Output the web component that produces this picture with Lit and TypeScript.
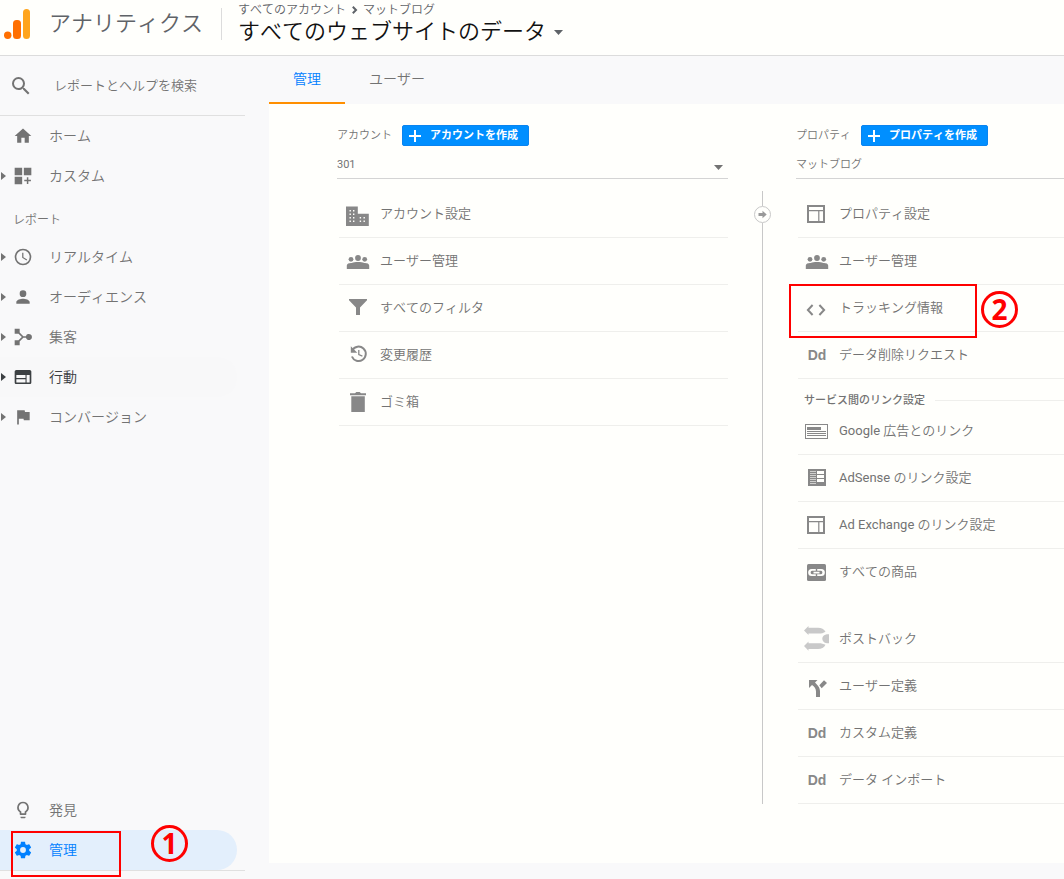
import { LitElement, html, css, svg, nothing, TemplateResult } from "lit";
import { customElement, state } from "lit/decorators.js";
import { classMap } from "lit/directives/class-map.js";

interface NavItem {
  label: string;
  icon: string;
  expandable?: boolean;
  state?: "hover" | "active";
  step?: string;
}

interface AdminItem {
  label: string;
  icon: string;
  step?: string;
  last?: boolean;
}

const topNav: NavItem[] = [
  { label: "ホーム", icon: "home" },
  { label: "カスタム", icon: "custom", expandable: true },
];

const reportNav: NavItem[] = [
  { label: "リアルタイム", icon: "clock", expandable: true },
  { label: "オーディエンス", icon: "person", expandable: true },
  { label: "集客", icon: "acquisition", expandable: true },
  { label: "行動", icon: "web", expandable: true, state: "hover" },
  { label: "コンバージョン", icon: "flag", expandable: true },
];

const bottomNav: NavItem[] = [
  { label: "発見", icon: "bulb" },
  { label: "管理", icon: "gear", state: "active", step: "1" },
];

const accountItems: AdminItem[] = [
  { label: "アカウント設定", icon: "building" },
  { label: "ユーザー管理", icon: "users" },
  { label: "すべてのフィルタ", icon: "filter" },
  { label: "変更履歴", icon: "history" },
  { label: "ゴミ箱", icon: "trash" },
];

const propertyItems: AdminItem[] = [
  { label: "プロパティ設定", icon: "layout" },
  { label: "ユーザー管理", icon: "users" },
  { label: "トラッキング情報", icon: "code", step: "2" },
  { label: "データ削除リクエスト", icon: "Dd" },
];

const linkItems: AdminItem[] = [
  { label: "Google 広告とのリンク", icon: "ads" },
  { label: "AdSense のリンク設定", icon: "adsense" },
  { label: "Ad Exchange のリンク設定", icon: "layout" },
  { label: "すべての商品", icon: "link", last: true },
];

const dataItems: AdminItem[] = [
  { label: "ポストバック", icon: "postback" },
  { label: "ユーザー定義", icon: "split" },
  { label: "カスタム定義", icon: "Dd" },
  { label: "データ インポート", icon: "Dd" },
];

const icons: Record<string, TemplateResult> = {
  search: svg`<path d="M15.5 14h-.79l-.28-.27A6.47 6.47 0 0 0 16 9.5 6.5 6.5 0 1 0 9.5 16c1.61 0 3.09-.59 4.23-1.57l.27.28v.79l5 4.99L20.49 19l-4.99-5zm-6 0C7.01 14 5 11.99 5 9.5S7.01 5 9.5 5 14 7.01 14 9.5 11.99 14 9.5 14z"/>`,
  home: svg`<path d="M10 20v-6h4v6h5v-8h3L12 3 2 12h3v8z"/>`,
  custom: svg`<path d="M2 2h9v9H2zM13 2h9v9h-9zM2 13h9v9H2zM16.6 13.5h1.8v3.1h3.1v1.8h-3.1v3.1h-1.8v-3.1h-3.1v-1.8h3.1z"/>`,
  clock: svg`<path d="M12 2a10 10 0 1 0 0 20 10 10 0 0 0 0-20zm0 18a8 8 0 1 1 0-16 8 8 0 0 1 0 16zM12.5 7H11v6l5.25 3.15.75-1.23-4.5-2.67z"/>`,
  person: svg`<path d="M12 12a4 4 0 1 0 0-8 4 4 0 0 0 0 8zm0 2c-2.67 0-8 1.34-8 4v2h16v-2c0-2.66-5.33-4-8-4z"/>`,
  acquisition: svg`<path d="M2 2h6v4.6l4.4 4.4h3.1a3.7 3.7 0 1 1 0 2h-3.1L8 17.4V22H2v-6h4.6l4-4-4-4H2z"/>`,
  web: svg`<path d="M20 3.500H4c-1.100 0-2 .9-2 2v13c0 1.100.9 2 2 2h16c1.100 0 2-.9 2-2v-13c0-1.100-.9-2-2-2zm-5 15.200H4v-4h11v4zm0-5.500H4V9.500h11v3.700zm5 5.500h-3.700V9.500H20v9.200z"/>`,
  flag: svg`<path d="M14.400 6 14 4H5v17h2v-7h5.600l.4 2h7V6z"/>`,
  bulb: svg`<path d="M9 21c0 .55.45 1 1 1h4c.55 0 1-.45 1-1v-.8H9v.8zm3-19a7 7 0 0 0-4 12.740V17c0 .55.45 1 1 1h6c.55 0 1-.45 1-1v-2.260A7 7 0 0 0 12 2zm2.850 11.100-.85.6V16h-4v-2.300l-.85-.6A5 5 0 1 1 14.850 13.100z"/>`,
  gear: svg`<path d="M19.430 12.980c.04-.32.07-.64.07-.98s-.03-.66-.07-.98l2.110-1.650c.19-.15.24-.42.12-.64l-2-3.460c-.12-.22-.39-.3-.61-.22l-2.490 1c-.52-.4-1.080-.73-1.690-.98l-.38-2.650A.488.488 0 0 0 14 2h-4c-.25 0-.46.18-.49.42l-.38 2.650c-.61.25-1.170.59-1.690.98l-2.490-1c-.23-.09-.49 0-.61.22l-2 3.460c-.13.22-.07.49.12.64l2.110 1.650c-.04.32-.07.65-.07.98s.03.66.07.98l-2.110 1.650c-.19.15-.24.42-.12.64l2 3.460c.12.22.39.3.61.22l2.490-1c.52.4 1.080.73 1.690.98l.38 2.650c.03.24.24.42.49.42h4c.25 0 .46-.18.49-.42l.38-2.650c.61-.25 1.170-.59 1.690-.98l2.490 1c.23.09.49 0 .61-.22l2-3.460c.12-.22.07-.49-.12-.64l-2.110-1.650zM12 15.500a3.500 3.500 0 1 1 0-7 3.500 3.500 0 0 1 0 7z"/>`,
  building: svg`<path d="M0 4.500h11.800v7.200h11V24H0z"/><g class="cut"><path d="M3.500 8h1.400v1.400H3.500zM7 8h1.400v1.400H7zM3.500 11.500h1.400v1.400H3.500zM7 11.500h1.400v1.400H7zM3.500 15h1.400v1.400H3.500zM7 15h1.400v1.400H7zM3.500 18.500h1.400v1.400H3.500zM7 18.500h1.400v1.400H7zM13.700 15h1.400v1.400h-1.400zM17.500 15h1.400v1.400h-1.400zM13.700 18.500h1.400v1.400h-1.400zM17.500 18.500h1.400v1.400h-1.400z"/></g>`,
  users: svg`<circle cx="5" cy="10.300" r="2.400"/><circle cx="12" cy="9" r="2.900"/><circle cx="18.700" cy="10.300" r="2.400"/><path d="M.8 20v-3.400c0-2 2.700-2.700 5-2.500 1.500-.7 3.500-1 6.200-1s4.700.3 6.200 1c2.300-.2 5 .5 5 2.500V20z"/>`,
  filter: svg`<path d="M3 3h18v1.300l-7 7.200V19h-4v-7.500L3 4.300z"/>`,
  history: svg`<path class="line" d="M6.300 7.300A7.200 7.200 0 1 1 5.900 13.500"/><path d="M4.800 3.300v6.500h6.500z"/><path class="thin" d="M12.800 7v4.600l3.600 1.500"/>`,
  trash: svg`<path d="M4 3.200h5L10.300 2h3.400L15 3.200h5v2H4zM5.300 6.200h13.500V22H5.300z"/>`,
  layout: svg`<path fill-rule="evenodd" d="M2 3h18v18H2zm2 2v3h14V5zm0 4.200V19h9.200V9.200zm10.400 0V19H18V9.200z"/>`,
  code: svg`<path class="line" d="M7.600 9 2.900 14l4.700 5M14.400 9l4.700 5-4.700 5"/>`,
  ads: svg`<path fill-rule="evenodd" d="M0 5h23v15H0zm1 1v13h21V6z"/><path d="M2 8h14v3H2zM2 12h19v1H2zM2 14h19v1H2zM2 16h19v1H2z"/>`,
  adsense: svg`<path d="M3 3h18v17H3z"/><g class="cut"><path d="M12 5h7v3h-7zM12 9h7v3h-7zM12 13h7v3h-7z"/><path opacity=".6" d="M5 5h6v1H5zM5 7h6v1H5zM5 9h6v1H5zM5 11h6v1H5zM5 13h6v1H5zM5 15h6v1H5zM5 17h6v1H5z"/></g>`,
  link: svg`<rect x="2" y="4" width="19" height="17" rx="1.500"/><g class="cut"><path fill-rule="evenodd" d="M6.700 9h4.100v1.800H7a1.800 1.800 0 0 0 0 3.500h3.800v1.800H6.700a3.550 3.550 0 0 1 0-7.100zM12.200 9h4.100a3.550 3.550 0 0 1 0 7.100h-4.100v-1.800H16a1.800 1.800 0 0 0 0-3.500h-3.800zM8.500 11.700h6v1.700h-6z"/></g>`,
  postback: svg`<g class="pale"><path d="M-1 3.500 3.500-1v1.700H13c3.500 0 6 1.300 7.500 4-2 1.300-4 1.800-7 1.800h-10V8zM-1 19 3.500 14.500v1.700h10c3 0 5 .5 7 1.600-1.500 2.900-4 4.200-7.500 4.200H3.500v1.700z"/><path d="M24 7.300v8.900c-3.500.3-6.500-1.200-6.700-4.500.2-3.200 3.200-4.700 6.700-4.400z"/></g>`,
  split: svg`<path d="M4 6h8.500L10 8.500c2.600 2.600 5 5 5 9V23h-4v-5.500c0-3-1.600-4.700-4-6.400L4 14zM14.300 11.300 19 6.300 22 9l-5.300 5.300z"/>`,
};

const icon = (name: string, size: number) =>
  html`<svg class="icon" width=${size} height=${size} viewBox="0 0 24 24" aria-hidden="true">${icons[name]}</svg>`;

@customElement("app-root")
export class AppRoot extends LitElement {
  @state() private tab = "管理";

  static styles = css`
    :host {
      display: flex;
      flex-direction: column;
      min-height: 100vh;
      background: #f9f9fa;
      color: #737373;
      font-family: Roboto, "Noto Sans CJK JP DemiLight", "Noto Sans CJK JP", sans-serif;
      font-size: 13px;
      font-weight: 400;
      font-kerning: none;
      line-height: 20px;
    }
    * {
      box-sizing: border-box;
    }
    a {
      color: inherit;
      text-decoration: none;
    }
    button,
    input,
    select {
      margin: 0;
      padding: 0;
      border: 0;
      background: none;
      color: inherit;
      font: inherit;
      font-kerning: none;
      outline: none;
    }
    button {
      cursor: pointer;
    }
    svg {
      display: block;
      flex: none;
      overflow: visible;
      fill: currentColor;
    }
    .cut {
      fill: #fffffc;
    }
    .pale {
      fill: #c9c9c9;
    }
    .line,
    .thin {
      fill: none;
      stroke: currentColor;
      stroke-width: 2;
    }
    .thin {
      stroke-width: 1.3;
    }

    /* Header */
    .header {
      display: flex;
      align-items: flex-start;
      height: 56px;
      border-bottom: 1px solid #dcdcdc;
      background: #fffffc;
    }
    .brand {
      display: flex;
      align-items: center;
      gap: 18px;
      width: 221px;
      height: 48px;
      padding-left: 4px;
      color: #5f6368;
      font-size: 22px;
      font-weight: 300;
    }
    .switcher {
      display: flex;
      flex-direction: column;
      align-items: flex-start;
      margin-top: 8px;
      height: 32px;
      padding-left: 16px;
      border-left: 1px solid #dcdcdc;
      justify-content: center;
    }
    .crumbs {
      display: flex;
      align-items: center;
      gap: 6px;
      font-size: 12px;
      line-height: 16px;
      color: #5f6368;
    }
    .view {
      display: flex;
      align-items: center;
      gap: 8px;
      color: #111;
      font-size: 22px;
      font-weight: 300;
      line-height: 28px;
    }
    .view svg {
      color: #5f6368;
    }

    /* Sidebar */
    .body {
      display: flex;
      flex: 1;
    }
    .sidebar {
      display: flex;
      flex-direction: column;
      flex: none;
      width: 245px;
      margin-right: 24px;
      padding-bottom: 8px;
    }
    .search {
      display: flex;
      align-items: center;
      gap: 21px;
      height: 60px;
      padding-left: 9px;
      border-bottom: 1px solid #e0e0e0;
    }
    .search input {
      flex: 1;
      min-width: 0;
    }
    .search input::placeholder {
      color: #737373;
      opacity: 1;
    }
    .nav-item {
      position: relative;
      display: grid;
      grid-template-columns: 12px 20px 1fr;
      align-items: center;
      height: 40px;
      margin-right: 8px;
      padding-left: 1px;
      border-radius: 0 20px 20px 0;
      font-size: 14px;
    }
    .nav-item .text {
      padding-left: 16px;
    }
    .nav-item.hover {
      background: #f8f8f9;
      color: #3c4043;
    }
    .nav-item.active {
      background: #e3effc;
      color: #0080ff;
    }
    .group {
      padding: 14px 0 7px 13px;
      font-size: 12px;
    }
    .bottom {
      margin-top: auto;
      border-bottom: 1px solid #e0e0e0;
    }

    /* Main */
    .main {
      display: flex;
      flex-direction: column;
      flex: 1;
      min-width: 0;
      padding-bottom: 16px;
    }
    .tabs {
      display: flex;
      height: 48px;
    }
    .tab {
      padding: 0 24px;
      border-bottom: 2px solid transparent;
      font-size: 14px;
    }
    .tab.selected {
      border-color: #ff8f00;
      color: #0080ff;
    }
    .panel {
      display: grid;
      flex: 1;
      align-items: start;
      align-content: start;
      grid-template-columns: minmax(0, 391px) 68px minmax(0, 1fr);
      padding: 21px 0 0 68px;
      background: #fffffc;
    }
    .head {
      display: flex;
      align-items: center;
      gap: 10px;
      height: 21px;
      font-size: 11px;
    }
    .create {
      display: flex;
      align-items: center;
      gap: 9px;
      height: 21px;
      padding: 0 10px 0 6px;
      border: 1px solid #0a84f0;
      border-radius: 2px;
      background: #008fff;
      color: #fff;
      font-family: Roboto, "Noto Sans CJK JP", sans-serif;
      font-size: 11px;
      font-weight: 700;
      line-height: 16px;
    }
    .picker {
      position: relative;
      display: block;
      height: 33px;
      padding-top: 6px;
      border-bottom: 1px solid #d4d4d4;
    }
    .picker select {
      width: 100%;
      height: 26px;
      appearance: none;
      font-size: 11px;
    }
    .picker svg {
      position: absolute;
      right: 5px;
      top: 19px;
    }
    .list {
      margin: 0 0 0 2px;
      padding: 0;
      list-style: none;
    }
    .list.first {
      margin-top: 12px;
    }
    .list.spaced {
      margin-top: 20px;
    }
    .row {
      position: relative;
      height: 47px;
      border-bottom: 1px solid #efefec;
    }
    .row.last {
      border-color: transparent;
    }
    .row a {
      display: flex;
      align-items: center;
      gap: 10px;
      height: 46px;
      padding-left: 7px;
    }
    .row .icon,
    .dd {
      color: #888;
    }
    .dd {
      width: 24px;
      font-family: "Liberation Sans", sans-serif;
      font-size: 14px;
      font-weight: 700;
      text-align: center;
    }
    .section {
      display: flex;
      align-items: center;
      gap: 10px;
      height: 29px;
      margin: 0;
      padding: 14px 0 0 8px;
      font-family: Roboto, "Noto Sans CJK JP", sans-serif;
      font-size: 11px;
      font-weight: 500;
      line-height: 16px;
    }
    .section::after {
      content: "";
      flex: 1;
      border-top: 1px solid #efefec;
    }
    .rail {
      align-self: stretch;
      display: flex;
      flex-direction: column;
      align-items: center;
      margin-top: 66px;
    }
    .rail::before,
    .rail::after {
      content: "";
      width: 1px;
      height: 15px;
      background: #c8c8c8;
    }
    .rail::after {
      flex: 1;
    }
    .rail svg {
      color: #999;
    }

    /* Step annotations drawn over the interface */
    .frame,
    .step {
      position: absolute;
      border: 2px solid #f00;
      pointer-events: none;
    }
    .step {
      display: flex;
      align-items: center;
      justify-content: center;
      width: 37px;
      height: 37px;
      border-width: 3px;
      border-radius: 50%;
      color: #f00;
      font-family: "Noto Sans", sans-serif;
      font-size: 28px;
      font-weight: 700;
      line-height: 31px;
    }
    .nav-item .frame {
      left: 11px;
      top: 1px;
      width: 110px;
      height: 46px;
    }
    .nav-item .step {
      left: 151px;
      top: -5px;
    }
    .row .frame {
      left: -9px;
      top: -1px;
      width: 188px;
      height: 54px;
    }
    .row .step {
      left: 183px;
      top: 6px;
    }
  `;

  private mark(step?: string) {
    return step
      ? html`<span class="frame"></span><span class="step">${step}</span>`
      : nothing;
  }

  private caret() {
    return html`<svg width="9" height="5" viewBox="0 0 9 5" aria-hidden="true"><path d="M0 0h9L4.500 5z" /></svg>`;
  }

  private navItem(item: NavItem) {
    return html`<a
      href="#"
      class=${classMap({ "nav-item": true, hover: item.state === "hover", active: item.state === "active" })}
    >
      ${item.expandable
        ? html`<svg width="5" height="8" viewBox="0 0 5 8" aria-hidden="true"><path d="M0 0v8l5-4z" /></svg>`
        : html`<span></span>`}
      ${icon(item.icon, 20)}
      <span class="text">${item.label}</span>
      ${this.mark(item.step)}
    </a>`;
  }

  private rows(items: AdminItem[], extra = "") {
    return html`<ul class="list ${extra}">
      ${items.map(
        (item) => html`<li class=${classMap({ row: true, last: !!item.last })}>
          <a href="#">
            ${item.icon === "Dd" ? html`<span class="dd">Dd</span>` : icon(item.icon, 24)}
            <span>${item.label}</span>
          </a>
          ${this.mark(item.step)}
        </li>`
      )}
    </ul>`;
  }

  private columnHead(label: string, action: string, value: string, id: string, caret: boolean) {
    return html`<div class="head">
        <label for=${id}>${label}</label>
        <button class="create" type="button">
          <svg width="12" height="12" viewBox="0 0 12 12" aria-hidden="true"><path d="M5 0h2v5h5v2H7v5H5V7H0V5h5z" /></svg>
          <span>${action}</span>
        </button>
      </div>
      <div class="picker">
        <select id=${id}><option>${value}</option></select>
        ${caret ? this.caret() : nothing}
      </div>`;
  }

  render() {
    return html`
      <header class="header">
        <div class="brand">
          <svg width="27" height="31" viewBox="0 0 27 31" aria-hidden="true">
            <rect x="19" y="0" width="7" height="30" rx="3.500" fill="#ffa41c" />
            <rect x="9" y="11" width="8" height="19" rx="3.500" fill="#ff6f00" />
            <circle cx="3.700" cy="26.300" r="3.700" fill="#ff6f00" />
          </svg>
          <span>アナリティクス</span>
        </div>
        <div class="switcher">
          <div class="crumbs">
            <span>すべてのアカウント</span>
            <svg width="5" height="8" viewBox="0 0 5 8" aria-hidden="true"><path class="line" d="M.8.8 4 4 .8 7.200" /></svg>
            <span>マットブログ</span>
          </div>
          <button class="view" type="button"><span>すべてのウェブサイトのデータ</span>${this.caret()}</button>
        </div>
      </header>
      <div class="body">
        <nav class="sidebar">
          <label class="search">
            ${icon("search", 24)}
            <input type="text" placeholder="レポートとヘルプを検索" aria-label="レポートとヘルプを検索" />
          </label>
          ${topNav.map((i) => this.navItem(i))}
          <div class="group">レポート</div>
          ${reportNav.map((i) => this.navItem(i))}
          <div class="bottom">${bottomNav.map((i) => this.navItem(i))}</div>
        </nav>
        <main class="main">
          <div class="tabs" role="tablist">
            ${["管理", "ユーザー"].map(
              (t) => html`<button
                type="button"
                role="tab"
                aria-selected=${t === this.tab}
                class=${classMap({ tab: true, selected: t === this.tab })}
                @click=${() => (this.tab = t)}
              >${t}</button>`
            )}
          </div>
          <div class="panel">
            <section>
              ${this.columnHead("アカウント", "アカウントを作成", "301", "account", true)}
              ${this.rows(accountItems, "first")}
            </section>
            <div class="rail">
              <svg width="17" height="17" viewBox="0 0 17 17" aria-hidden="true">
                <circle cx="8.500" cy="8.500" r="8" fill="none" stroke="#c8c8c8" />
                <path d="M4.500 7h4V4.800l4.200 3.700-4.200 3.700V10h-4z" />
              </svg>
            </div>
            <section>
              ${this.columnHead("プロパティ", "プロパティを作成", "マットブログ", "property", false)}
              ${this.rows(propertyItems, "first")}
              <h2 class="section">サービス間のリンク設定</h2>
              ${this.rows(linkItems)}
              ${this.rows(dataItems, "spaced")}
            </section>
          </div>
        </main>
      </div>
    `;
  }
}
